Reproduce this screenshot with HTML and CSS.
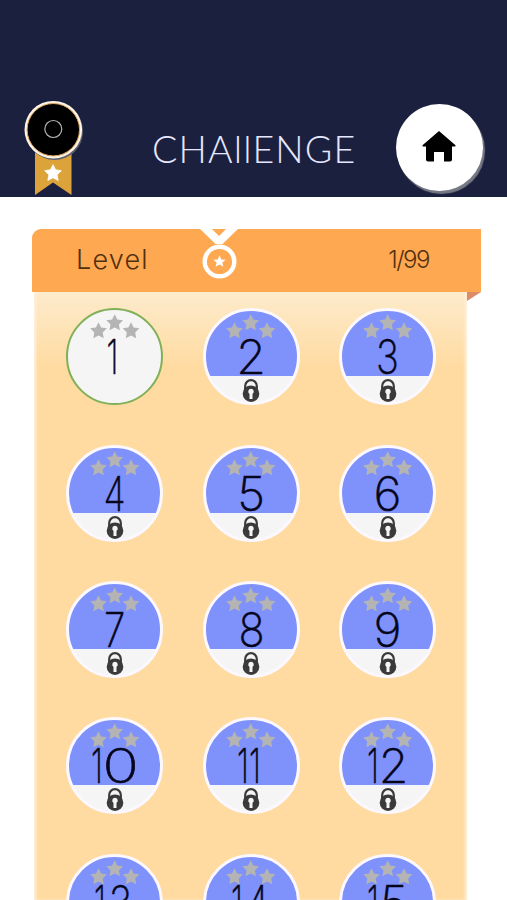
FILE: index.html
```html
<!DOCTYPE html>
<html lang="en">
<head>
<meta charset="utf-8">
<title>Challenge</title>
<link rel="stylesheet" href="styles.css">
</head>
<body>
<header class="top">
  <svg class="badge" width="64" height="98" viewBox="0 0 64 98">
    <path d="M13 44H49.500V95L31 82.500 13 95Z" fill="#dda33b"/>
    <circle cx="32.500" cy="31.500" r="28.500" fill="#62636d"/>
    <circle cx="31.300" cy="29.700" r="28.800" fill="#fff3e6"/>
    <circle cx="31.300" cy="29.700" r="26.200" fill="#000" stroke="#dfa55a"/>
    <circle cx="31.300" cy="29" r="8.500" fill="none" stroke="#b5b5b5" stroke-width="1.200"/>
    <path transform="translate(31 73) scale(8.300)" d="M0-1 .31-.38 1-.28.5.2.62.9 0 .57-.62.9-.5.2-1-.28-.31-.38Z" fill="#fff" stroke="#fff" stroke-width=".1" stroke-linejoin="round"/>
  </svg>
  <h1 class="title">CHAllENGE</h1>
  <button class="home" aria-label="Home">
    <svg width="34" height="32" viewBox="0 0 34 32"><path d="M17 0 33.500 14.300Q34 15.500 32.500 15.500H30V28.500Q30 30.500 28 30.500H22V21H12V30.500H6Q4 30.500 4 28.500V15.500H1.500Q0 15.500.5 14.300Z"/></svg>
  </button>
</header>
<main class="board">
  <div class="banner">
    <span class="level">Level</span>
    <svg class="medal" width="40" height="52" viewBox="0 0 40 52">
      <path d="M1 0H13L20 7 27 0H39L23.500 15H16.500Z" fill="#fff"/>
      <circle cx="20.500" cy="32.500" r="14.800" fill="none" stroke="#fff" stroke-width="4.400"/>
      <path transform="translate(20.500 32.500) scale(6.200)" d="M0-1 .28-.34 1-.28.46.17.62.85 0 .5-.62.85-.46.17-1-.28-.28-.34Z" fill="#fff"/>
    </svg>
    <span class="progress">1/99</span>
  </div>
  <div class="fold"></div>
  <div class="sheet"></div>
</main>
<script src="levels.js"></script>
</body>
</html>
```
FILE: levels.js
```js
const STAR = 'M0-8.500 2.600-3.100 8.300-2.400 4.200 1.700 5.200 7.600 0 4.900-5.200 7.600-4.200 1.700-8.300-2.400-2.600-3.100Z';
const stars = `<svg class="stars" width="52" height="30" viewBox="0 0 52 30">
  <path d="${STAR}" transform="translate(9.500 19.700)"/>
  <path d="${STAR}" transform="translate(25.700 11.700)"/>
  <path d="${STAR}" transform="translate(42 19.700)"/></svg>`;
const lock = `<svg class="lock" width="18" height="24" viewBox="0 0 18 24">
  <path d="M3.200 11V7a5.800 5.800 0 0 1 11.600 0V11" fill="none" stroke="#3a3a3a" stroke-width="2.200"/>
  <circle cx="9" cy="14.700" r="8.300" fill="#3a3a3a"/>
  <path d="M9 9.700a2.900 2.900 0 0 1 1.500 5.300V20H7.500V15A2.900 2.900 0 0 1 9 9.700Z" fill="#f5f5f5"/></svg>`;
const sheet = document.querySelector('.sheet');
for (let n = 1; n <= 15; n++) {
  const digits = [...String(n)].map(d => `<span class="digit d${d}">${d}</span>`).join('');
  sheet.insertAdjacentHTML('beforeend',
    `<div class="node ${n === 1 ? 'open' : 'locked'}">${stars}<div class="number">${digits}</div>${n === 1 ? '' : lock}</div>`);
}
```
FILE: styles.css
```css
* { box-sizing: border-box; }
body {
  margin: 0;
  height: 900px;
  overflow: hidden;
  background: #fff;
  font-family: Lato, sans-serif;
}
.top {
  height: 197px;
  background: #1b203e;
  display: grid;
  grid-template-columns: 153px 243px 88px;
  align-items: start;
}
.badge { margin: 100px 0 0 22px; }
.title {
  margin: 126px 0 0 -1px;
  font-size: 37.500px;
  line-height: 45px;
  font-weight: 300;
  letter-spacing: 1.200px;
  white-space: nowrap;
  color: #e6e8ff;
}
.home {
  margin-top: 104px;
  width: 87px;
  height: 87px;
  padding: 0 2px 1px 0;
  border: 0;
  border-radius: 50%;
  background: #fff;
  box-shadow: 2px 3px 1px #777984;
  display: grid;
  place-items: center;
}
.board { margin: 32px 0 0 32px; width: 449px; }
.banner {
  height: 63px;
  border-radius: 9px 0 0 0;
  background: #ffa852;
  color: #52300f;
  display: grid;
  grid-template-columns: 167px 40px 1fr;
}
.level {
  padding-left: 44px;
  font-family: Inter, sans-serif;
  font-size: 27px;
  font-weight: 300;
  line-height: 61px;
  letter-spacing: 1.200px;
}
.progress {
  justify-self: end;
  padding-right: 52px;
  font-family: Inter, sans-serif;
  font-weight: 300;
  font-size: 24px;
  line-height: 61px;
  letter-spacing: -1.500px;
}
.fold {
  height: 9px;
  width: 14px;
  margin-left: 435px;
  margin-bottom: -9px;
  background: #dc8a68;
  clip-path: polygon(0 0, 100% 0, 0 100%);
}
.sheet {
  width: 433px;
  height: 608px;
  overflow: hidden;
  margin-left: 2px;
  padding: 16.200px 0 0 32px;
  background: linear-gradient(#fdebcc, #ffdba1 75px);
  box-shadow: inset 3px 0 3px -1px #fff0dc, inset -3px 0 3px -1px #fff0dc;
  display: grid;
  grid-template-columns: repeat(3, 97px);
  grid-auto-rows: 97px;
  gap: 39.400px 39.500px;
}
.node {
  border: 3px solid #fbf8ff;
  border-radius: 50%;
  background: linear-gradient(#7f91fa 64.500px, #f5f5f5 65px);
  display: flex;
  flex-direction: column;
  align-items: center;
}
.open { border: 2px solid #80b057; background: #f5f5f5; padding-top: 1px; }
.stars { fill: #b4b4b4; flex: none; }
.number {
  height: 40px;
  margin-top: -3px;
  display: flex;
  justify-content: center;
  font: 200 48px/37px Inter, sans-serif;
  color: #05051c;
  -webkit-text-stroke: .6px #05051c;
}
.digit {
  width: 25px;
  display: flex;
  justify-content: center;
}
.d1 { width: 12px; transform: translateX(-2px) scaleX(.65); }
.d1:only-child { width: 17px; }
.d0 { transform: scaleX(1.250); width: 31px; }
.d8 { transform: scaleX(.9); }
.d3, .d7 { transform: scaleX(.8); }
.d4 { transform: scaleX(.75); }
.lock { flex: none; margin-top: 4px; }
```
